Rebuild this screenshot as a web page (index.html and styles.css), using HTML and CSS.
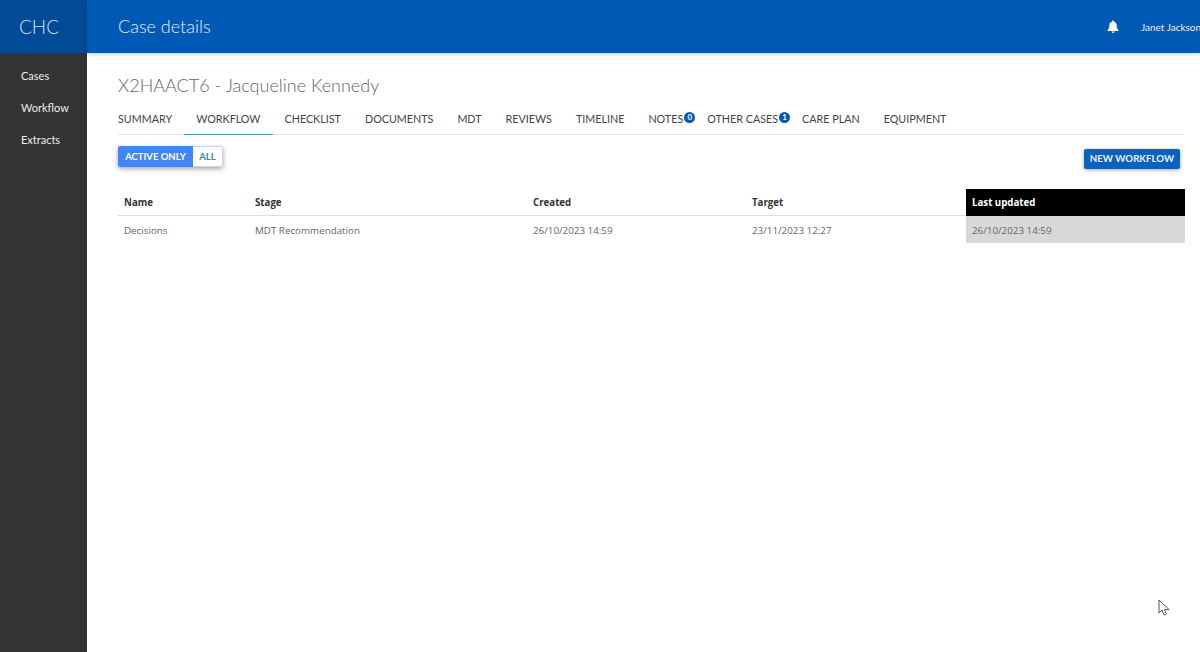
FILE: index.html
```html
<!DOCTYPE html>
<html lang="en">
<head>
    <meta charset="UTF-8">
    <title>Case details</title>
    <link rel="stylesheet" href="styles.css">
</head>
<body>
    <div class="sidebar">
        <div class="brand">CHC</div>
        <nav class="side-nav">
            <a>Cases</a>
            <a>Workflow</a>
            <a>Extracts</a>
        </nav>
    </div>
    <div class="main">
        <header class="topbar">
            <div class="page-title">Case details</div>
            <svg class="bell" viewBox="0 0 12 13" width="12" height="13">
                <path d="M6 0.4c-.6 0-1 .4-1 1v.4C3.300 2.300 2.300 3.700 2.300 5.500c0 2.600-.7 3.500-1.700 4.600v.9h10.800v-.9c-1-1.100-1.700-2-1.700-4.600 0-1.800-1-3.200-2.700-3.700v-.4c0-.6-.4-1-1-1zM4.500 11.500a1.500 1.400 0 0 0 3 0z" fill="#fff"/>
            </svg>
            <div class="user">Janet Jackson</div>
        </header>
        <section class="content">
            <h1>X2HAACT6 - Jacqueline Kennedy</h1>
            <div class="tabs">
                <a class="tab">SUMMARY</a>
                <a class="tab active">WORKFLOW</a>
                <a class="tab">CHECKLIST</a>
                <a class="tab">DOCUMENTS</a>
                <a class="tab">MDT</a>
                <a class="tab">REVIEWS</a>
                <a class="tab">TIMELINE</a>
                <a class="tab has-badge">NOTES<span class="badge">0</span></a>
                <a class="tab has-badge">OTHER CASES<span class="badge">1</span></a>
                <a class="tab">CARE PLAN</a>
                <a class="tab">EQUIPMENT</a>
            </div>
            <div class="toolbar">
                <div class="toggle">
                    <button class="toggle-on">ACTIVE ONLY</button>
                    <button class="toggle-off">ALL</button>
                </div>
                <button class="new-button">NEW WORKFLOW</button>
            </div>
            <table class="cases">
                <thead>
                    <tr>
                        <th class="col-name">Name</th>
                        <th class="col-stage">Stage</th>
                        <th class="col-created">Created</th>
                        <th class="col-target">Target</th>
                        <th class="sorted">Last updated</th>
                    </tr>
                </thead>
                <tbody>
                    <tr>
                        <td>Decisions</td>
                        <td>MDT Recommendation</td>
                        <td>26/10/2023 14:59</td>
                        <td>23/11/2023 12:27</td>
                        <td class="sorted">26/10/2023 14:59</td>
                    </tr>
                </tbody>
            </table>
        </section>
    </div>
    <!-- mouse pointer caught in the screenshot -->
    <svg class="pointer" viewBox="0 0 13 18" width="13" height="18">
        <path d="M1 1v13l3-3 2 5 2.500-1-2-4.500h4.500z" fill="#fff" stroke="#555" stroke-width="1"/>
    </svg>
</body>
</html>
```

FILE: styles.css
```css
html, body {
    height: 100%;
}
body {
    margin: 0;
    display: flex;
    overflow: hidden;
    background-color: #fff;
    font-family: Lato, "Open Sans", sans-serif;
}
.sidebar {
    width: 87px;
    flex-shrink: 0;
    background-color: #333;
}
.brand {
    height: 53px;
    line-height: 53px;
    padding-left: 19px;
    background-color: #004a96;
    color: #cfe6fb;
    font-size: 19px;
    font-weight: 300;
}
.side-nav {
    display: flex;
    flex-direction: column;
    gap: 14px;
    padding-top: 14px;
}
.side-nav a {
    padding-left: 21px;
    height: 18px;
    line-height: 18px;
    color: #eee;
    font-size: 11px;
}
.main {
    flex: 1;
    min-width: 0;
}
.topbar {
    height: 53px;
    display: flex;
    align-items: center;
    padding-left: 31px;
    background-color: #005ab5;
    box-shadow: 0 1px 4px rgba(0, 0, 0, 0.2);
    overflow: hidden;
}
.page-title {
    flex: 1;
    padding-bottom: 2px;
    color: #e0eefb;
    font-size: 18px;
    font-weight: 300;
}
.bell {
    flex-shrink: 0;
    margin-right: 22px;
}
.user {
    width: 59px;
    flex-shrink: 0;
    white-space: nowrap;
    color: #e6f0fb;
    font-size: 10px;
}
.content {
    padding: 20px 16px 0 30px;
}
h1 {
    margin: 0 0 0 1px;
    height: 25px;
    line-height: 25px;
    color: #666;
    font-size: 18px;
    font-weight: 300;
}
.tabs {
    display: flex;
    margin: 7px 0 0 1px;
    height: 29px;
    border-bottom: 1px solid #e6e6e6;
}
.tab {
    padding: 0 12px;
    height: 29px;
    line-height: 28px;
    color: #444;
    font-size: 10.750px;
    white-space: nowrap;
}
.tab:first-child {
    padding-left: 0;
}
.tab.active {
    border-bottom: 1px solid #4a9bb0;
}
.tab.has-badge {
    padding-right: 0;
}
.badge {
    display: inline-block;
    vertical-align: 3px;
    width: 11px;
    height: 11px;
    margin-left: 1px;
    line-height: 11px;
    border-radius: 50%;
    background-color: #005ab5;
    color: #fff;
    font-size: 8px;
    font-weight: 700;
    text-align: center;
}
.tab.has-badge + .tab.has-badge {
    padding-left: 12px;
}
.toolbar {
    display: flex;
    justify-content: space-between;
    align-items: flex-start;
    margin: 11px 4px 0 1px;
}
.toolbar button {
    border: none;
    font-family: inherit;
    font-weight: 700;
    cursor: pointer;
}
.toggle {
    display: flex;
    height: 21px;
    border-radius: 2px;
    box-shadow: 0 2px 5px rgba(0, 0, 0, 0.35);
}
.toggle .toggle-on {
    width: 75px;
    padding: 0;
    background-color: #4285f4;
    color: #fff;
    font-size: 9.500px;
    border-radius: 2px 0 0 2px;
}
.toggle .toggle-off {
    width: 30px;
    padding: 0;
    background-color: #fff;
    color: #3d8ea3;
    font-size: 9.500px;
    border: 1px solid #c4d6df;
    border-left: none;
    border-radius: 0 2px 2px 0;
}
.new-button {
    margin-top: 3px;
    width: 96px;
    height: 20px;
    padding: 0 0 2px;
    background-color: #0a62bf;
    color: #e8f3fd;
    font-size: 9.700px;
    border-radius: 2px;
    box-shadow: 0 1px 4px rgba(0, 0, 0, 0.35);
}
.cases {
    width: 1067px;
    margin: 20px 0 0 1px;
    border-collapse: collapse;
    table-layout: fixed;
    font-family: "Open Sans", sans-serif;
    font-size: 9.800px;
}
.cases th {
    height: 26px;
    padding: 0 0 0 6px;
    border-bottom: 1px solid #ddd;
    color: #333;
    font-size: 9.700px;
    font-weight: 700;
    text-align: left;
}
.cases td {
    height: 26px;
    padding: 1px 0 0 6px;
    color: #666;
}
.col-name {
    width: 125px;
}
.col-stage {
    width: 272px;
}
.col-created {
    width: 213px;
}
.col-target {
    width: 214px;
}
.cases th.sorted {
    background-color: #000;
    color: #fff;
    border-bottom-color: #000;
}
.cases td.sorted {
    background-color: #d8d8d8;
}
.pointer {
    position: absolute;
    left: 1158px;
    top: 599px;
}
```
